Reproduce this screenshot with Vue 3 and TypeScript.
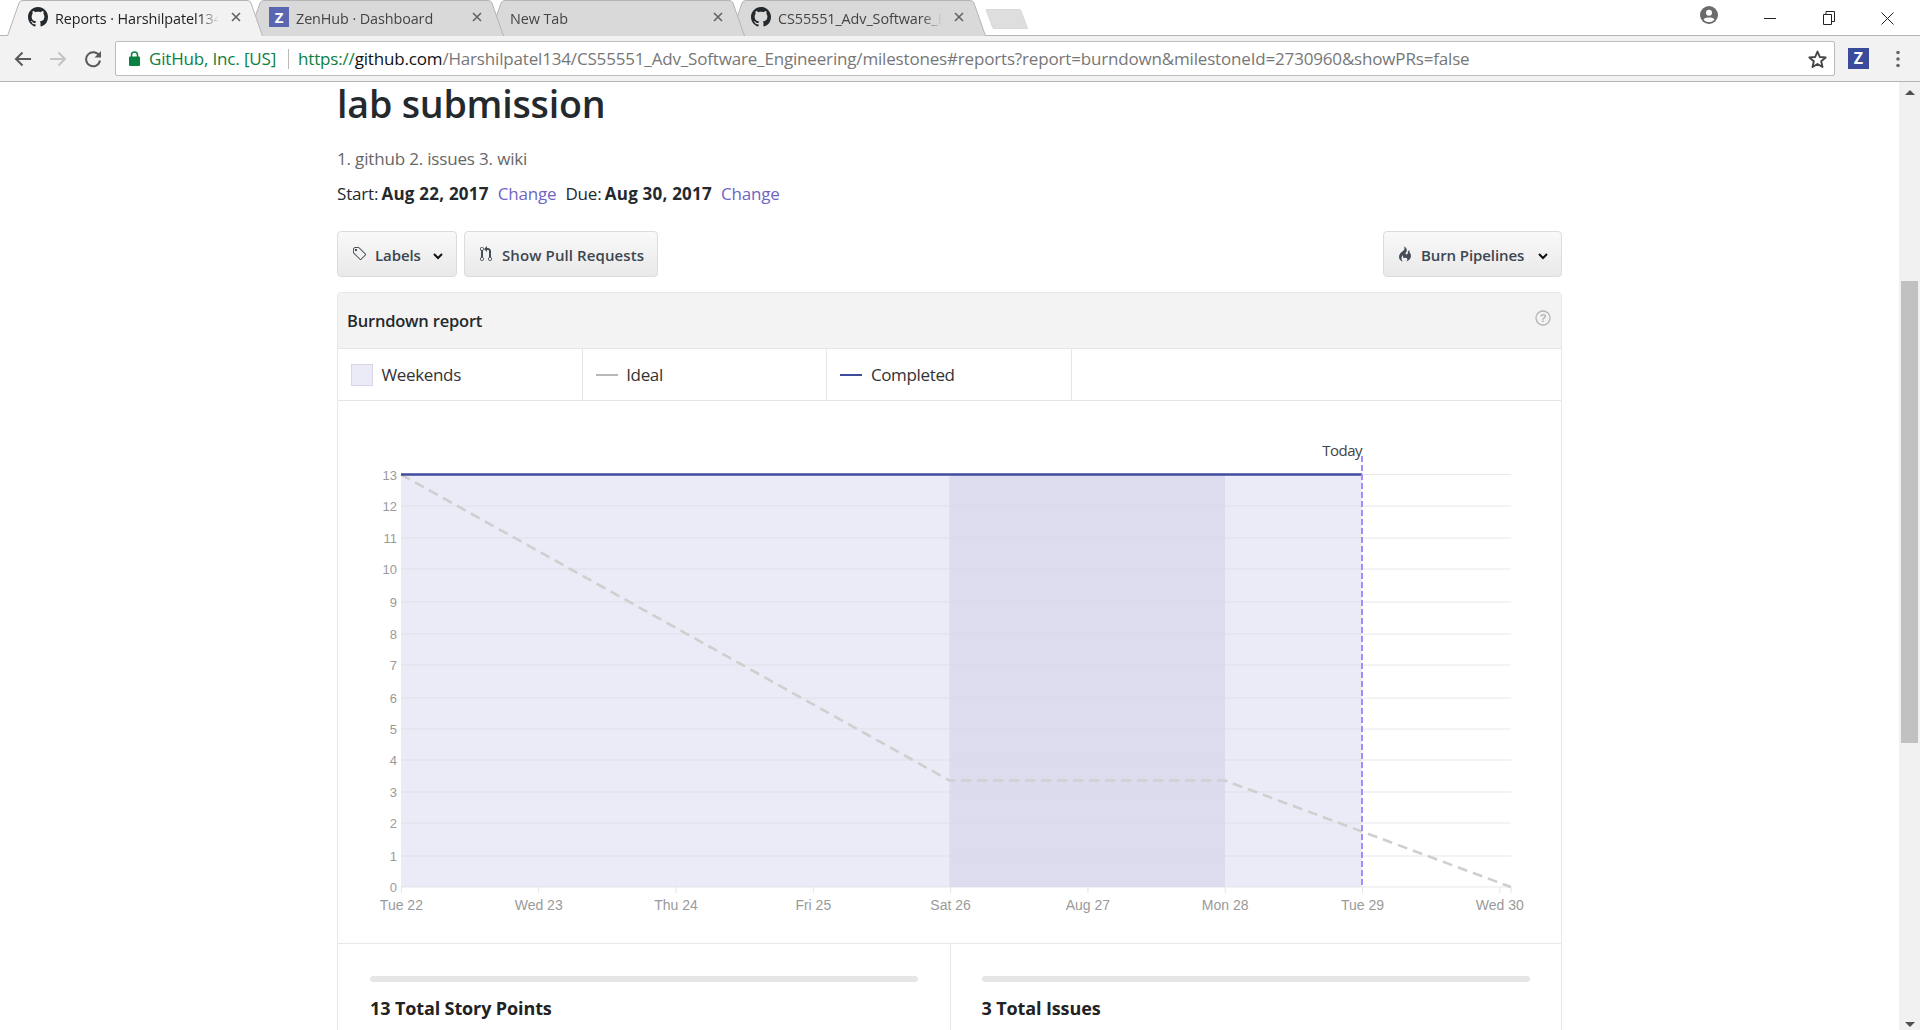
<script setup lang="ts">
const octo = "M8 0C3.58 0 0 3.58 0 8c0 3.54 2.29 6.53 5.47 7.59.4.07.55-.17.55-.38 0-.19-.01-.82-.01-1.49-2.01.37-2.53-.49-2.69-.94-.09-.23-.48-.94-.82-1.13-.28-.15-.68-.52-.01-.53.63-.01 1.08.58 1.23.82.72 1.21 1.87.87 2.33.66.07-.52.28-.87.51-1.07-1.78-.2-3.64-.89-3.64-3.95 0-.87.31-1.59.82-2.15-.08-.2-.36-1.02.08-2.12 0 0 .67-.21 2.2.82.64-.18 1.32-.27 2-.27.68 0 1.36.09 2 .27 1.53-1.04 2.2-.82 2.2-.82.44 1.1.16 1.92.08 2.12.51.56.82 1.27.82 2.15 0 3.07-1.87 3.75-3.65 3.95.29.25.54.73.54 1.48 0 1.07-.01 1.93-.01 2.2 0 .21.15.46.55.38A8.013 8.013 0 0 0 16 8c0-4.42-3.58-8-8-8z";

interface Tab { title: string; icon: string; active?: boolean; }
const tabs: Tab[] = [
  { title: "Reports · Harshilpatel134/CS55551", icon: "gh", active: true },
  { title: "ZenHub · Dashboard", icon: "z" },
  { title: "New Tab", icon: "" },
  { title: "CS55551_Adv_Software_Engineering", icon: "gh" },
];

const legend = [
  { label: "Weekends", kind: "box" },
  { label: "Ideal", kind: "ideal" },
  { label: "Completed", kind: "done" },
];

const plot = { left: 401, right: 1511, top: 474.5, bottom: 887, today: 1362 };
const gridY = [887, 856, 823, 792, 760, 729, 698, 665, 634, 602, 569, 538, 506, 474.5];
const days = ["Tue 22", "Wed 23", "Thu 24", "Fri 25", "Sat 26", "Aug 27", "Mon 28", "Tue 29", "Wed 30"];
const dayX = days.map((_, i) => 401.4 + i * 137.3);
</script>

<template>
  <div class="window">
    <header class="chrome">
      <div class="tabstrip">
        <div class="tabs">
          <div v-for="t in tabs" :key="t.title" class="tab" :class="{ active: t.active }">
            <svg class="tab-shape" width="256" height="36" viewBox="0 0 256 36">
              <path d="M0.5 36 L12 3 Q13 0.5 16 0.5 L240 0.5 Q243 0.5 244 3 L255.5 36" />
            </svg>
            <svg v-if="t.icon === 'gh'" class="favicon" width="20" height="20" viewBox="0 0 16 16"><path :d="octo" fill="#24292e" /></svg>
            <span v-else-if="t.icon === 'z'" class="favicon zfav">Z</span>
            <span class="tab-title">{{ t.title }}</span>
            <svg class="tab-close" width="10" height="10" viewBox="0 0 10 10"><path d="M1 1 L9 9 M9 1 L1 9" stroke="#5f6368" stroke-width="1.6" /></svg>
          </div>
        </div>
        <svg class="newtab" width="44" height="22" viewBox="0 0 44 22"><path d="M1 1.5 L34 1.5 Q35.5 1.5 36 3 L42.5 20.5 L9 20.5 Q8 20.5 7.5 19 Z" fill="#dedede" stroke="#d8d8d8" /></svg>
        <div class="winctrls">
          <svg class="profile" width="18" height="18" viewBox="0 0 18 18"><circle cx="9" cy="9" r="9" fill="#6b6b6b" /><circle cx="9" cy="6.8" r="3" fill="#fff" /><path d="M3.6 13.4 C5 11 13 11 14.4 13.4 C13 15.4 11 16 9 16 C7 16 5 15.4 3.6 13.4 Z" fill="#fff" /></svg>
          <svg class="wc wc-min" width="12" height="12" viewBox="0 0 12 12"><path d="M0 6.5 H12" stroke="#222" /></svg>
          <svg class="wc wc-max" width="12" height="14" viewBox="0 0 12 14"><path d="M0.5 3.5 H8.5 V13.5 H0.5 Z M3 3.5 V0.5 H11.5 V10.5 H8.5" fill="none" stroke="#222" /></svg>
          <svg class="wc wc-close" width="13" height="13" viewBox="0 0 13 13"><path d="M0.5 0.5 L12.5 12.5 M12.5 0.5 L0.5 12.5" stroke="#222" /></svg>
        </div>
      </div>
      <div class="toolbar">
        <svg class="nav" width="18" height="16" viewBox="0 0 18 16"><path d="M17 8 H2 M8.5 1.5 L2 8 L8.5 14.5" fill="none" stroke="#5a5a5a" stroke-width="2" /></svg>
        <svg class="nav" width="18" height="16" viewBox="0 0 18 16"><path d="M1 8 H16 M9.5 1.5 L16 8 L9.5 14.5" fill="none" stroke="#c4c4c4" stroke-width="2" /></svg>
        <svg class="nav" width="18" height="18" viewBox="0 0 18 18"><path d="M15.3 6 A7 7 0 1 0 16 10.5" fill="none" stroke="#5a5a5a" stroke-width="2" /><path d="M17 1 V7.5 H10.5 Z" fill="#5a5a5a" /></svg>
        <div class="omnibox">
          <svg width="11" height="15" viewBox="0 0 11 15" class="lock"><rect x="0" y="5.5" width="11" height="9.5" rx="1" fill="#0b8043" /><path d="M2.5 6 V4 a3 3 0 0 1 6 0 V6" fill="none" stroke="#0b8043" stroke-width="1.5" /></svg>
          <span class="ev">GitHub, Inc. [US]</span>
          <span class="omsep"></span>
          <span class="url"><span class="scheme">https://</span><span class="host">github.com</span>/Harshilpatel134/CS55551_Adv_Software_Engineering/milestones#reports?report=burndown&amp;milestoneId=2730960&amp;showPRs=false</span>
          <svg class="star" width="19" height="18" viewBox="0 0 24 23"><path d="M12 2 L14.9 8.9 L22.4 9.5 L16.7 14.4 L18.4 21.7 L12 17.8 L5.6 21.7 L7.3 14.4 L1.6 9.5 L9.1 8.9 Z" fill="none" stroke="#444" stroke-width="2.4" stroke-linejoin="round" /></svg>
        </div>
        <span class="zext">Z</span>
        <svg class="dots" width="4" height="18" viewBox="0 0 4 18"><circle cx="2" cy="2.5" r="1.8" fill="#666" /><circle cx="2" cy="9" r="1.8" fill="#666" /><circle cx="2" cy="15.5" r="1.8" fill="#666" /></svg>
      </div>
    </header>

    <div class="viewport">
      <main class="page">
        <div class="container">
          <h1>lab submission</h1>
          <p class="desc">1. github 2. issues 3. wiki</p>
          <p class="dates">Start: <b>Aug 22, 2017</b><a class="change">Change</a><span class="due">Due: <b>Aug 30, 2017</b></span><a class="change">Change</a></p>

          <div class="actions">
            <button class="btn btn-labels">
              <svg width="14" height="16" viewBox="0 0 14 16"><path fill="#444d56" d="M7.73 1.73C7.26 1.26 6.62 1 5.96 1H3.5C2.13 1 1 2.13 1 3.5v2.47c0 .66.27 1.3.73 1.77l6.06 6.06c.39.39 1.02.39 1.41 0l4.59-4.59a.996.996 0 0 0 0-1.41L7.73 1.73zM2.38 7.09c-.31-.3-.47-.7-.47-1.13V3.5c0-.88.72-1.59 1.59-1.59h2.47c.42 0 .83.16 1.13.47l6.14 6.13-4.73 4.73-6.13-6.15zM3.01 3h2v2H3V3h.01z" /></svg>
              <span>Labels</span>
              <svg class="chev" width="10" height="7" viewBox="0 0 10 7"><path d="M1 1 L5 5 L9 1" fill="none" stroke="#111" stroke-width="2" /></svg>
            </button>
            <button class="btn btn-prs">
              <svg width="12" height="16" viewBox="0 0 12 16"><path fill="#444d56" d="M11 11.28V5c-.03-.78-.34-1.47-.94-2.06C9.46 2.35 8.78 2.03 8 2H7V0L4 3l3 3V4h1c.27.02.48.11.69.31.21.2.3.42.31.69v6.28A1.993 1.993 0 0 0 10 15a1.993 1.993 0 0 0 1-3.72zm-1 2.92c-.66 0-1.2-.55-1.2-1.2 0-.65.55-1.2 1.2-1.2.65 0 1.2.55 1.2 1.2 0 .65-.55 1.2-1.2 1.2zM4 3c0-1.11-.89-2-2-2a1.993 1.993 0 0 0-1 3.72v6.56A1.993 1.993 0 0 0 2 15a1.993 1.993 0 0 0 1-3.72V4.72c.59-.34 1-.98 1-1.72zm-.8 10c0 .66-.55 1.2-1.2 1.2-.65 0-1.2-.55-1.2-1.2 0-.65.55-1.2 1.2-1.2.65 0 1.2.55 1.2 1.2zM2 4.2C1.34 4.2.8 3.65.8 3c0-.65.55-1.2 1.2-1.2.65 0 1.2.55 1.2 1.2 0 .65-.55 1.2-1.2 1.2z" /></svg>
              <span>Show Pull Requests</span>
            </button>
            <button class="btn btn-burn">
              <svg width="12" height="16" viewBox="0 0 12 16"><path fill="#444d56" d="M5.05.31c.81 2.17.41 3.38-.52 4.31C3.55 5.67 1.98 6.45.9 7.98c-1.45 2.05-1.7 6.53 3.53 7.7-2.2-1.16-2.67-4.52-.3-6.61-.61 2.03.53 3.33 1.94 2.86 1.39-.47 2.3.53 2.27 1.67-.02.78-.31 1.44-1.13 1.81 3.42-.59 4.78-3.42 4.78-5.56 0-2.84-2.53-3.22-1.25-5.61-1.52.13-2.03 1.13-1.89 2.75.09 1.08-1.02 1.8-1.86 1.33-.67-.41-.66-1.19-.06-1.78C8.18 5.31 8.68 2.45 5.05.32L5.03.3l.02.01z" /></svg>
              <span>Burn Pipelines</span>
              <svg class="chev" width="10" height="7" viewBox="0 0 10 7"><path d="M1 1 L5 5 L9 1" fill="none" stroke="#111" stroke-width="2" /></svg>
            </button>
          </div>

          <section class="card">
            <div class="card-head">
              <span>Burndown report</span>
              <svg width="16" height="16" viewBox="0 0 16 16"><circle cx="8" cy="8" r="7" fill="none" stroke="#b5b5b5" stroke-width="1.3" /><text x="8" y="11.5" text-anchor="middle" class="qmark">?</text></svg>
            </div>
            <div class="legend">
              <div v-for="l in legend" :key="l.label" class="legend-item">
                <span class="swatch" :class="l.kind"></span>
                <span>{{ l.label }}</span>
              </div>
            </div>
            <svg class="chart" width="1223" height="542" viewBox="338 401 1223 542">
              <rect :x="plot.left" :y="plot.top" :width="plot.today - plot.left" :height="plot.bottom - plot.top" fill="#ebebf7" />
              <rect x="949.5" :y="plot.top" width="275.5" :height="plot.bottom - plot.top" fill="#dcdcee" />
              <line v-for="y in gridY" :key="y" :x1="plot.left" :x2="plot.right" :y1="y" :y2="y" stroke="#d8d8e2" stroke-opacity="0.6" stroke-width="1.2" />
              <text v-for="(y, i) in gridY" :key="'l' + i" x="397" :y="y + 5" text-anchor="end" class="ytick">{{ i }}</text>
              <line v-for="x in dayX" :key="x" :x1="x" :x2="x" :y1="plot.bottom" :y2="plot.bottom + 6" stroke="#e4e4e4" />
              <line :x1="plot.right" :x2="plot.right" :y1="plot.bottom" :y2="plot.bottom + 6" stroke="#e4e4e4" />
              <text v-for="(d, i) in days" :key="d" :x="dayX[i]" y="910" text-anchor="middle" class="xtick">{{ d }}</text>
              <polyline points="401,474.5 949.5,780.5 1225,780.5 1511,887" fill="none" stroke="#cfcfcf" stroke-width="2.6" stroke-dasharray="10 6" />
              <line :x1="plot.left" :x2="plot.today" :y1="plot.top" :y2="plot.top" stroke="#3f4c9e" stroke-width="2.6" />
              <line :x1="plot.today" :x2="plot.today" y1="456" :y2="plot.bottom" stroke="#a78bfa" stroke-width="2" stroke-dasharray="6 3" />
              <text :x="plot.today" y="456" text-anchor="end" class="today">Today</text>
            </svg>
            <div class="stats">
              <div class="stat">
                <div class="bar"></div>
                <h3>13 Total Story Points</h3>
              </div>
              <div class="stat">
                <div class="bar"></div>
                <h3>3 Total Issues</h3>
              </div>
            </div>
          </section>
        </div>
      </main>
      <aside class="scrollbar">
        <span class="arrow up"></span>
        <div class="track"><div class="thumb"></div></div>
        <span class="arrow down"></span>
      </aside>
    </div>
  </div>
</template>

<style scoped>
.window { width: 1920px; height: 1030px; display: flex; flex-direction: column; overflow: hidden; background: #fff; font-family: "Open Sans", "Noto Sans", sans-serif; color: #24292e; }
.chrome { flex: none; height: 82px; display: flex; flex-direction: column; }
.tabstrip { height: 36px; display: flex; align-items: flex-start; padding-left: 7px; position: relative; background: #fff; border-bottom: 1px solid #b4b4b4; box-sizing: border-box; }
.tabs { display: flex; height: 36px; }
.tab { position: relative; width: 256px; height: 36px; margin-right: -15px; display: flex; align-items: center; box-sizing: border-box; padding: 0 22px 0 21px; font-size: 14.4px; color: #444; }
.tab:nth-child(1) { z-index: 4; }
.tab:nth-child(2) { z-index: 3; }
.tab:nth-child(3) { z-index: 2; }
.tab:nth-child(4) { z-index: 1; }
.tab-shape { position: absolute; left: 0; top: 0; }
.tab-shape path { fill: #d9d9d9; stroke: #b4b4b4; }
.tab.active .tab-shape path { fill: #f2f2f2; }
.tab.active { color: #222; }
.favicon { position: relative; flex: none; margin-right: 7px; margin-top: -2px; }
.zfav { width: 20px; height: 20px; background: #5b66b0; color: #fff; font-weight: 700; font-size: 15px; text-align: center; line-height: 20px; }
.tab-title { position: relative; flex: 1; min-width: 0; white-space: nowrap; overflow: hidden; -webkit-mask-image: linear-gradient(to right, #000 88%, transparent 100%); mask-image: linear-gradient(to right, #000 88%, transparent 100%); letter-spacing: -0.1px; }
.tab-close { position: relative; flex: none; margin-left: 12px; margin-top: -2px; }
.newtab { margin: 8px 0 0 14px; }
.winctrls { margin-left: auto; height: 34px; display: flex; align-items: flex-start; }
.profile { margin: 6px 46px 0 0; }
.wc { margin-top: 12px; }
.wc-min { margin-right: 47px; }
.wc-max { margin-top: 11px; margin-right: 46px; }
.wc-close { margin-right: 26px; }
.toolbar { flex: 1; background: #f2f2f2; border-bottom: 1px solid #b4b4b4; display: flex; align-items: center; box-sizing: border-box; padding-left: 14px; }
.nav { flex: none; margin-right: 17px; }
.omnibox { width: 1720px; height: 35px; margin-left: -4px; background: #fff; border: 1px solid #bcbcbc; border-radius: 2px; box-sizing: border-box; display: flex; align-items: center; padding-left: 13px; font-size: 17px; white-space: nowrap; overflow: hidden; letter-spacing: -0.17px; }
.lock { flex: none; margin-right: 9px; }
.ev { color: #0b8043; }
.omsep { width: 1px; height: 20px; background: #bbb; margin: 0 9px 0 12px; flex: none; }
.url { flex: 1; color: #777; min-width: 0; overflow: hidden; }
.scheme { color: #0b8043; }
.host { color: #111; }
.star { flex: none; margin: 0 7px 0 5px; }
.zext { flex: none; width: 21px; height: 21px; margin-left: 13px; background: #3b4b9c; color: #fff; font-weight: 700; text-align: center; line-height: 21px; font-size: 16px; }
.dots { flex: none; margin-left: 27px; }

.viewport { flex: 1; min-height: 0; display: flex; }
.page { flex: 1; min-width: 0; overflow: hidden; }
.container { width: 1225px; margin: 0 auto; }
h1 { margin: 0; font-size: 37.6px; line-height: 44px; font-weight: 600; color: #24292e; letter-spacing: -0.2px; }
.desc { margin: 22px 0 0; font-size: 17px; line-height: 22px; color: #666; letter-spacing: -0.17px; }
.dates { margin: 13px 0 0; font-size: 17px; line-height: 22px; letter-spacing: -0.17px; }
.dates b { font-weight: 700; letter-spacing: 0.22px; margin-left: -1px; }
.change { color: #6f65c4; margin-left: 9px; }
.due { margin-left: 9px; }
.actions { display: flex; gap: 7px; margin-top: 26px; }
.btn { height: 46px; box-sizing: border-box; display: flex; align-items: center; border: 1px solid #dcdcdc; border-radius: 4px; background: linear-gradient(#f9f9f9, #e9e9e9); font: 600 15px "Open Sans", sans-serif; color: #3c4650; padding: 2px 0 0; letter-spacing: -0.1px; }
.btn svg { margin-top: -2px; }
.btn .chev { margin-top: 2px; }
.btn-labels { width: 120px; padding-left: 14px; }
.btn-labels span { margin-left: 9px; }
.btn-labels .chev { margin-left: 12px; }
.btn-prs { width: 194px; padding-left: 15px; letter-spacing: 0.1px; }
.btn-prs span { margin-left: 10px; }
.btn-burn { width: 179px; margin-left: auto; padding-left: 15px; }
.btn-burn span { margin-left: 10px; }
.btn-burn .chev { margin-left: 14px; }
.card { margin-top: 15px; border: 1px solid #e8e8e8; border-bottom: none; border-radius: 4px 4px 0 0; }
.card-head { height: 55px; background: #f3f3f3; border-bottom: 1px solid #e6e6e6; display: flex; align-items: center; justify-content: space-between; padding: 0 10px 0 9px; font-size: 16.5px; font-weight: 600; letter-spacing: -0.2px; }
.card-head svg { margin-top: -5px; }
.qmark { font: 700 11px "Liberation Sans", sans-serif; fill: #b5b5b5; }
.legend { height: 52px; display: flex; border-bottom: 1px solid #e6e6e6; box-sizing: border-box; font-size: 17px; letter-spacing: -0.35px; color: #333; }
.legend-item { width: 244.7px; box-sizing: border-box; border-right: 1px solid #e6e6e6; display: flex; align-items: center; padding-left: 13px; gap: 8.5px; }
.swatch { width: 22px; flex: none; box-sizing: border-box; }
.swatch.box { height: 22px; background: #ebebf7; border: 1px solid #d6d6e6; }
.swatch.ideal { height: 2px; background: #b8b8b8; }
.swatch.done { height: 2px; background: #3f4c9e; }
.chart { display: block; }
.ytick, .xtick { font: 14px "Liberation Sans", sans-serif; fill: #9a9a9a; }
.ytick { font-size: 13px; }
.today { font: 15px "Open Sans", sans-serif; fill: #444; letter-spacing: -0.5px; }
.stats { display: flex; border-top: 1px solid #e8e8e8; height: 120px; }
.stat { box-sizing: border-box; padding: 32px 32px 0; }
.stat:first-child { width: 611.5px; }
.stat + .stat { flex: 1; border-left: 1px solid #e8e8e8; padding-left: 31px; padding-right: 31px; }
.bar { height: 6px; border-radius: 3px; background: #e6e6e6; }
h3 { margin: 14px 0 0; font-size: 18px; line-height: 24px; font-weight: 700; color: #222; letter-spacing: -0.12px; }
.scrollbar { flex: none; width: 21px; background: #f1f1f1; display: flex; flex-direction: column; align-items: center; }
.arrow { flex: none; width: 0; height: 0; border-left: 5px solid transparent; border-right: 5px solid transparent; }
.arrow.up { border-bottom: 5px solid #505050; margin: 8px 0 4px; }
.arrow.down { border-top: 5px solid #505050; margin: 4px 0 3px; }
.track { flex: 1; width: 100%; }
.thumb { width: 17px; height: 462px; margin: 182px auto 0; background: #c1c1c1; }
</style>
